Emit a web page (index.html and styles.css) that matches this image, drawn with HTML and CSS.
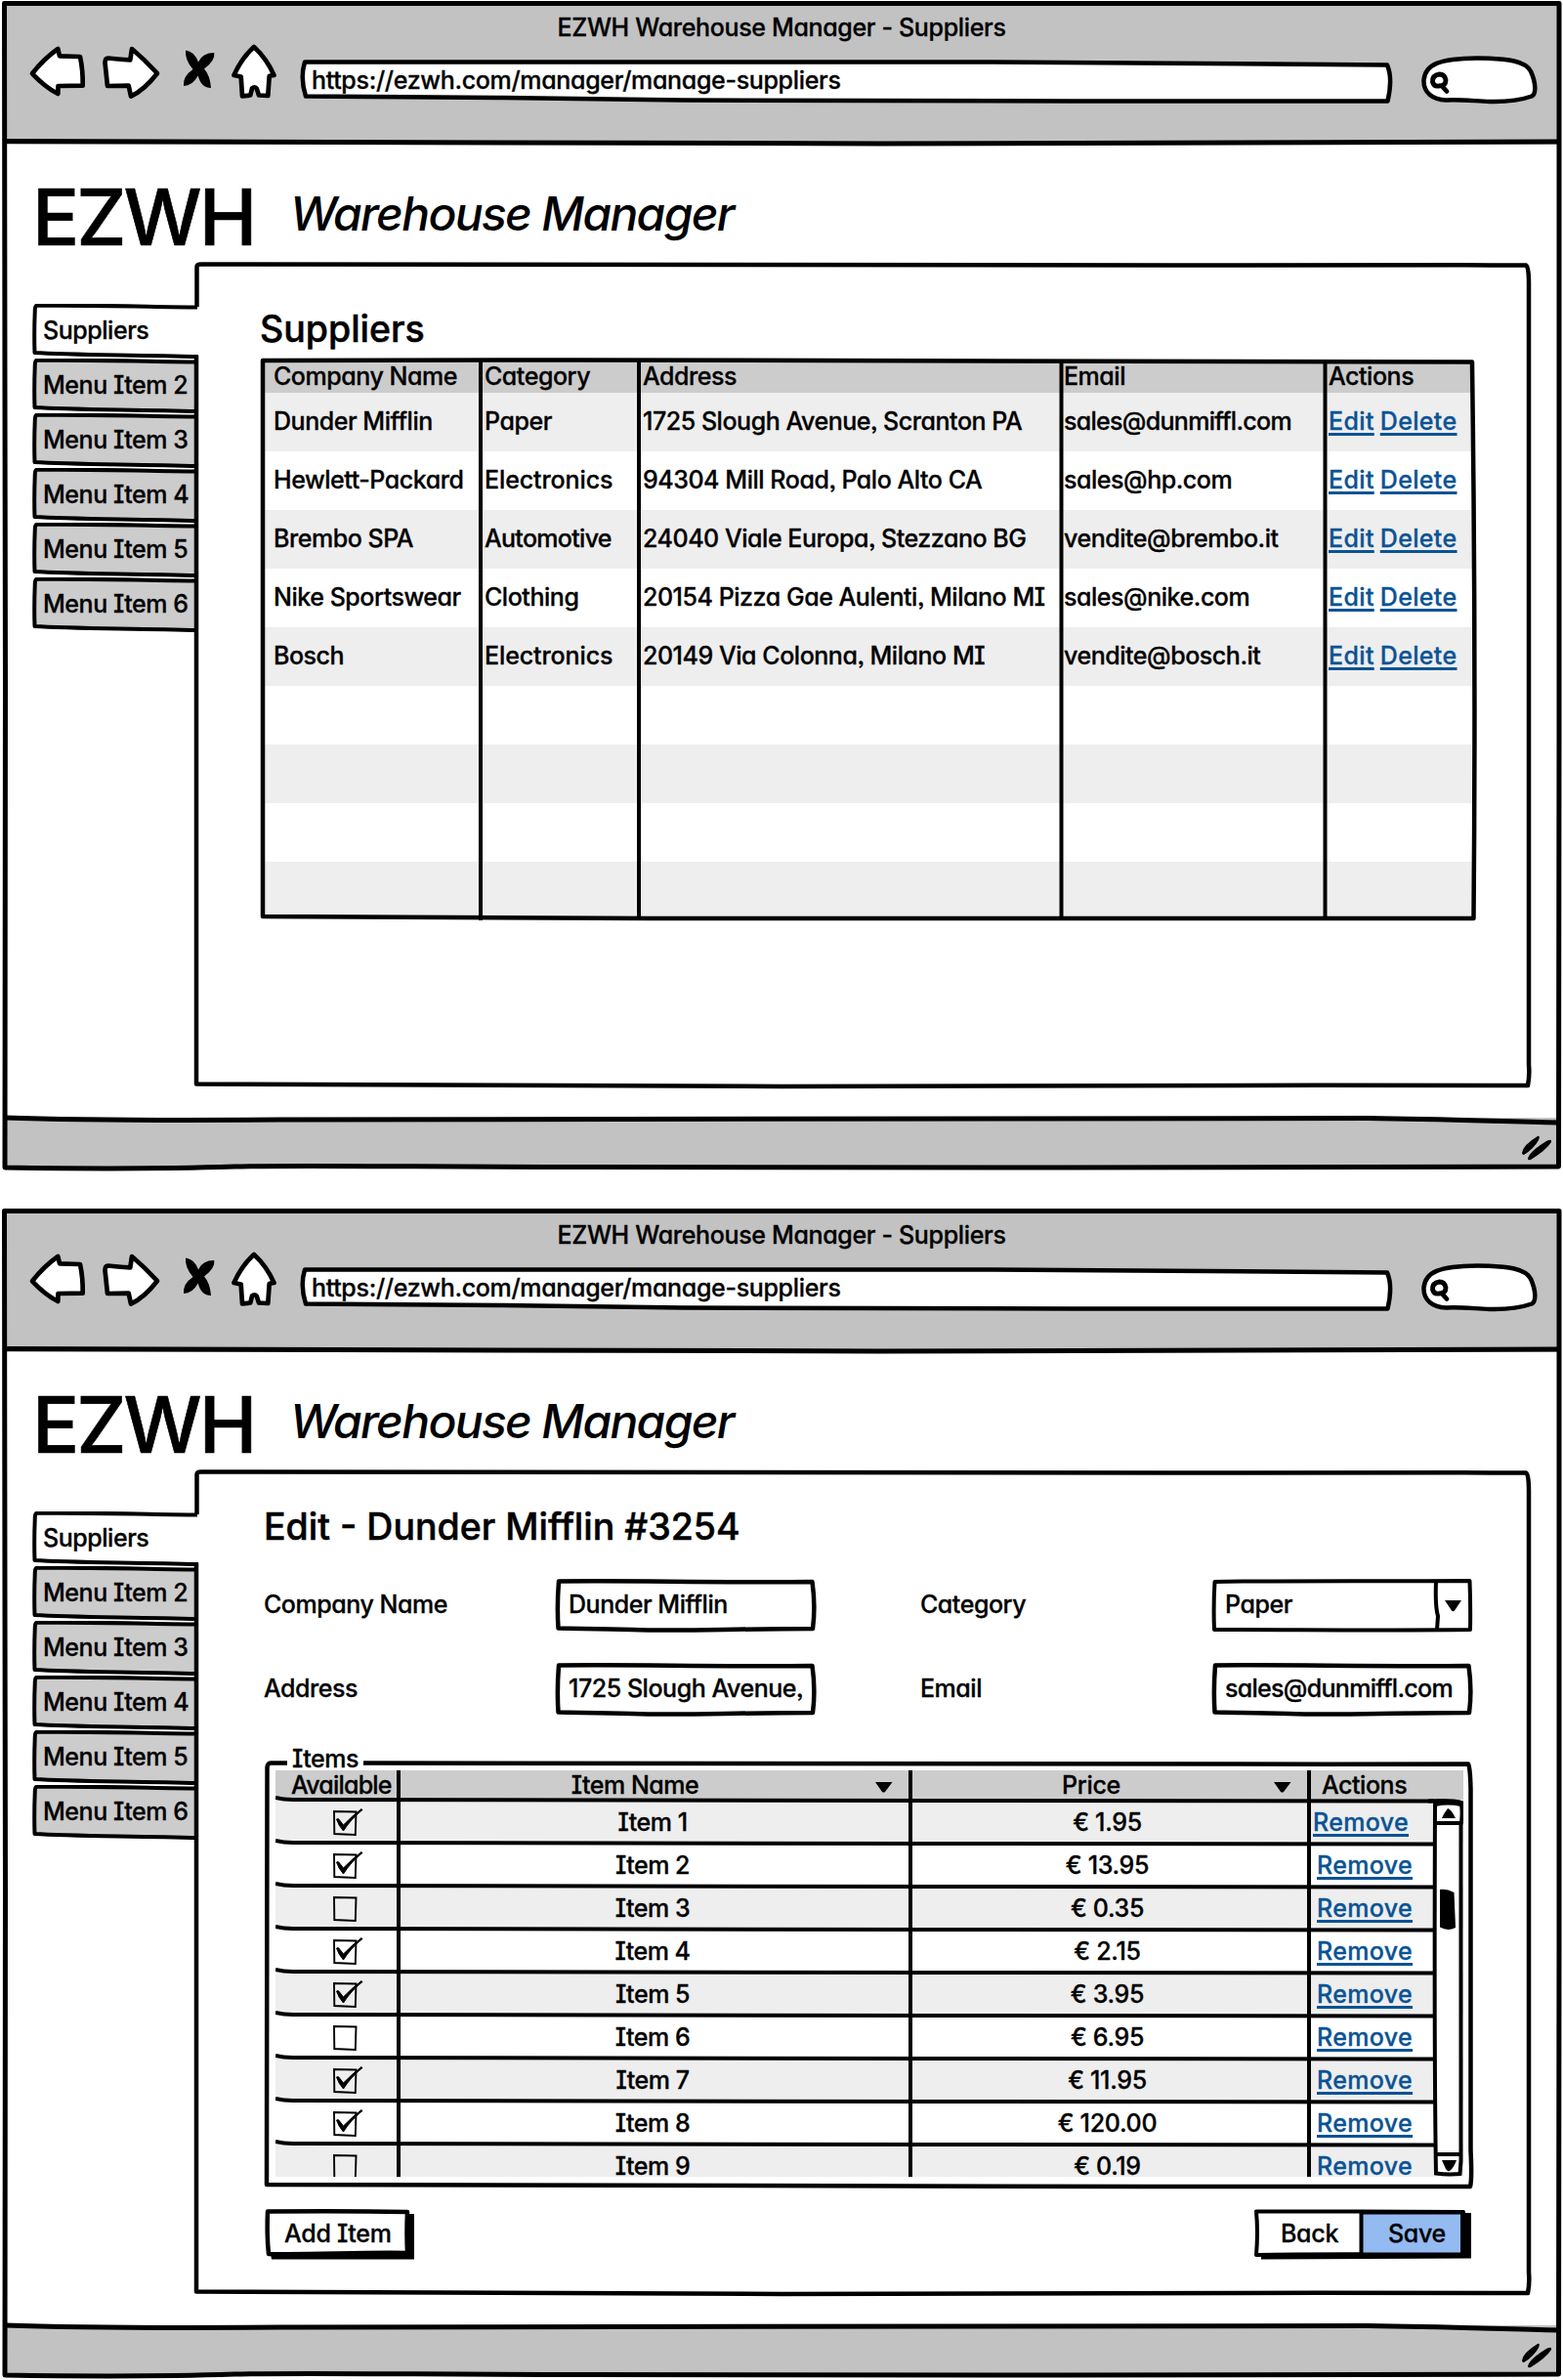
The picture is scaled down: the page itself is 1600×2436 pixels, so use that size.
FILE: index.html
```html
<!DOCTYPE html>
<html lang="en">
<head>
<meta charset="utf-8">
<title>EZWH Warehouse Manager - Suppliers</title>
<link rel="stylesheet" href="styles.css">
</head>
<body>
<svg class="defs" width="0" height="0">
  <symbol id="frame" viewBox="0 0 1600 1200">
    <g fill="none" stroke="#000" stroke-width="5" stroke-linejoin="round">
      <path d="M4.500 3.500H1596V760L1595.500 1194C1300 1195.500 900 1195 600 1194.500C400 1194 300 1192.500 240 1194C150 1197 70 1196 5 1195L5.500 700L5 400Z"/>
      <path d="M5 144.500C300 147.500 600 147 900 147C1200 147.500 1400 144.500 1595 145"/>
      <path d="M5 1144C100 1147.500 220 1146.500 300 1146C600 1144.500 1000 1143.500 1400 1144.500C1480 1145.500 1540 1148 1595 1149"/>
    </g>
    <g fill="none" stroke="#000" stroke-linejoin="round">
      <path stroke-width="4.500" d="M201.500 314V273Q201.500 270.500 206 270.500C600 270.500 900 270 1200 271.500C1350 272 1450 271 1562 271.500Q1565 272 1565 290V1090Q1566 1100 1564 1111C1300 1110 1000 1112.500 800 1112C500 1111.500 350 1109.500 201 1109.500V364"/>
    </g>
    <path d="M1558 1180Q1559 1172 1574 1163Q1577 1162 1575 1167Q1570 1176 1560 1182Q1558 1182 1558 1180ZM1564 1186Q1565 1179 1583 1168Q1589 1165 1588 1169Q1583 1177 1567 1187Q1564 1188 1564 1186Z"/>
  </symbol>
  <symbol id="back" viewBox="28 42 64 64"><path class="ink" d="M59.300 50Q45 60 33 75.300Q46 89 59.300 96L59.500 88L84.700 87.700Q85 72 82 58L61 57.300Z"/></symbol>
  <symbol id="forward" viewBox="102 42 64 64"><path class="ink" d="M135 50Q148 61 161 75Q148 92 134 98.500L131.700 87.700L110 88Q109 78 107.500 64.300Q107.500 59.500 110.700 59.500Q120 60.500 133.300 61.300Z"/></symbol>
  <symbol id="stop" viewBox="184 42 40 64"><path d="M190 51.500Q199 52.500 203 63.500Q207 54 219.300 54Q220.500 62 209 70.500Q215 77 216 90Q206 90 202.700 77.500Q197 88 188 88Q187 78 197.500 71Q189 61 190 51.500Z"/></symbol>
  <symbol id="home" viewBox="234 42 52 64"><path class="ink" d="M260 48Q247 60 239.500 77L246.700 78.500L248 98.300L256.300 97.500L258 90.500Q260.500 88 262.700 90.500L265 97.500L274.300 98L275.700 77.800L280.500 77Q273 60 260 48Z"/></symbol>
  <symbol id="urlbar" viewBox="305 58 1124 52"><path fill="#fff" stroke="#000" stroke-width="4.500" stroke-linejoin="round" d="M313 63.500H1000C1200 64 1300 65.500 1420 66.500Q1426 80 1420.500 103.500C1200 103.500 900 104 700 102.500C600 101 400 98.500 313 98.500Q307 80 312 63.500Z"/></symbol>
  <symbol id="search" viewBox="1450 54 128 56"><path fill="#fff" stroke="#000" stroke-width="4.500" stroke-linecap="round" d="M1480 102.500C1467 102 1457 95 1457.500 82C1459 66 1473 60 1512 59.500C1545 59.500 1562 63 1567 73C1572 84 1573 96 1568 98.500C1558 102 1545 104.500 1525 104C1505 103 1490 101.500 1481 102.500"/><path fill="none" stroke="#000" stroke-width="4.800" stroke-linecap="round" d="M1473.500 76Q1466 77 1466.500 84Q1468 89 1473 88Q1480 88 1480 82Q1479 76 1473.500 76ZM1476 88L1481 93.500"/></symbol>
  <symbol id="tab" viewBox="0 0 172 57"><path stroke="#000" stroke-width="4" stroke-linejoin="round" d="M169 3.500C120 3 60 1 4.500 1.800Q3 2 2.800 6Q1.800 30 2.500 50C40 52.500 100 52 170 54"/></symbol>
  <symbol id="suppliers-grid" viewBox="0 0 1250 580"><g fill="none" stroke="#000" stroke-linejoin="round"><path stroke-width="4.500" d="M4 4C400 2.500 700 4.500 1242 5.500Q1246 300 1243.500 575C1000 574 700 576 400 575C200 575 100 573 4 573Q3.500 300 4 4Z"/><path stroke-width="4" d="M227 3V577M389 3V577M821.500 3V577M1091.500 3V577"/></g></symbol>
  <symbol id="input" viewBox="0 0 270 58"><path fill="#fff" stroke="#000" stroke-width="4.500" stroke-linejoin="round" d="M5 4.500C80 3.500 160 6 264.500 5Q268 30 265 53C180 53 130 56 80 54C50 53 30 53 4.500 52.500Q3 30 5 4.500Z"/></symbol>
  <symbol id="combo" viewBox="0 0 270 58"><g fill="#fff" stroke="#000" stroke-width="4" stroke-linejoin="round"><path d="M4.500 5C80 3.500 170 4.500 265.500 4Q266.500 30 266 54C180 55 90 54 4 54Q3 30 4.500 5Z"/><path d="M231 5Q230 30 233 40L232 54"/></g><path d="M240 24H257L250 34.500Q248.500 36 247 34.500Z"/></symbol>
  <symbol id="group" viewBox="0 0 1240 444"><path fill="none" stroke="#000" stroke-width="4.500" stroke-linejoin="round" d="M24 3.500H7Q4 3.500 3.500 8Q4 200 3 435C300 437 600 438 900 437L1235 437Q1237 430 1235.500 400V30Q1235 8 1233 4.500C900 5.500 600 3 102 3.500"/></symbol>
  <symbol id="items-grid" viewBox="0 0 1216 416">
    <g fill="none" stroke="#000" stroke-width="4">
      <path id="rule" d="M0 28Q8 30 18 30C400 30.500 800 31.500 1186 31.500"/>
      <use href="#rule" y="44"/><use href="#rule" y="88"/><use href="#rule" y="132"/><use href="#rule" y="176"/><use href="#rule" y="220"/><use href="#rule" y="264"/><use href="#rule" y="308"/><use href="#rule" y="352"/>
      <path d="M126 0V416M650 0V416M1058 0V416"/>
    </g>
    <path fill="#fff" stroke="#000" stroke-width="4" d="M1187 35Q1200 32 1214 35Q1215.500 45 1213.500 56V400L1212.500 413Q1200 414 1188 412.500Q1186 300 1187 35ZM1187 54H1214M1187 393H1214"/>
    <path fill="none" stroke="#000" stroke-width="4" d="M1180 31.500Q1205 30 1216 33.500"/>
    <path d="M1200 39Q1203 39 1208 49H1194Q1196 44 1200 39ZM1194 399H1209Q1206 407 1202 410Q1200 411 1198 408ZM1192 122Q1199 121 1206.500 125L1208 161Q1200 165 1192 160.500Z"/>
    <path d="M614 12H631.500L624 22Q622.500 23 621 22ZM1022 12H1039.500L1032 22Q1030.500 23 1029 22Z"/>
  </symbol>
  <symbol id="box" viewBox="0 0 32 30"><path fill="none" stroke="#000" stroke-width="1.900" d="M2 4L24.500 4.500L23.800 28L2.300 27Z"/></symbol>
  <symbol id="checked" viewBox="0 0 32 30"><use href="#box"/><path stroke="#000" stroke-width="1" d="M4.500 12Q6.500 10.500 8 13.500L11.500 18Q20 9 30 1.500L31 2.500Q19 12 11.500 24Q6.500 18.500 4.500 12Z"/></symbol>
  <symbol id="button" viewBox="0 0 156 54"><path d="M7 48L8 53.500H154V7H147V46Z"/><path fill="#fff" stroke="#000" stroke-width="4.500" stroke-linejoin="round" d="M4 4.500C50 4 100 4 147 5Q146 25 147 47C100 46 50 49 5 48Q3 30 4 4.500Z"/></symbol>
  <symbol id="buttonbar" viewBox="0 0 228 54"><path d="M9 49V53.500L224 52.500V6H216V48Z"/><path fill="#fff" stroke="#000" stroke-width="4" stroke-linejoin="round" d="M4 4.500C70 4 150 5 216 5L215 48C150 49 70 47.500 4 49Q6 25 4 4.500Z"/><path fill="#94baf2" stroke="#000" stroke-width="4" d="M111.500 5.500H215V48.500H111.500Z"/></symbol>
</svg>

<section class="window">
  <svg class="frame"><use href="#frame"/></svg>
  <header class="chrome">
    <div class="title">EZWH Warehouse Manager - Suppliers</div>
    <nav class="toolbar">
      <svg class="i-back"><use href="#back"/></svg>
      <svg class="i-forward"><use href="#forward"/></svg>
      <svg class="i-stop"><use href="#stop"/></svg>
      <svg class="i-home"><use href="#home"/></svg>
      <div class="url"><svg class="sketch"><use href="#urlbar"/></svg><span>https://ezwh.com/manager/manage-suppliers</span></div>
      <svg class="i-search"><use href="#search"/></svg>
    </nav>
  </header>
  <div class="brand"><span class="logo">EZWH</span><span class="product">Warehouse Manager</span></div>
  <div class="content">
    <nav class="tabs">
      <div class="tab active"><svg class="sketch"><use href="#tab"/></svg><span>Suppliers</span></div>
      <div class="tab"><svg class="sketch"><use href="#tab"/></svg><span>Menu Item 2</span></div>
      <div class="tab"><svg class="sketch"><use href="#tab"/></svg><span>Menu Item 3</span></div>
      <div class="tab"><svg class="sketch"><use href="#tab"/></svg><span>Menu Item 4</span></div>
      <div class="tab"><svg class="sketch"><use href="#tab"/></svg><span>Menu Item 5</span></div>
      <div class="tab"><svg class="sketch"><use href="#tab"/></svg><span>Menu Item 6</span></div>
    </nav>
    <main class="panel list">
      <h2>Suppliers</h2>
      <div class="suppliers">
        <svg class="sketch"><use href="#suppliers-grid"/></svg>
        <div class="row head"><span>Company Name</span><span>Category</span><span>Address</span><span>Email</span><span>Actions</span></div>
        <div class="row"><span>Dunder Mifflin</span><span>Paper</span><span>1725 Slough Avenue, Scranton PA</span><span class="tight">sales@dunmiffl.com</span><span class="links"><a>Edit</a><a>Delete</a></span></div>
        <div class="row"><span>Hewlett-Packard</span><span class="wide">Electronics</span><span>94304 Mill Road, Palo Alto CA</span><span>sales@hp.com</span><span class="links"><a>Edit</a><a>Delete</a></span></div>
        <div class="row"><span>Brembo SPA</span><span class="tight">Automotive</span><span>24040 Viale Europa, Stezzano BG</span><span>vendite@brembo.it</span><span class="links"><a>Edit</a><a>Delete</a></span></div>
        <div class="row"><span>Nike Sportswear</span><span>Clothing</span><span>20154 Pizza Gae Aulenti, Milano MI</span><span>sales@nike.com</span><span class="links"><a>Edit</a><a>Delete</a></span></div>
        <div class="row"><span>Bosch</span><span class="wide">Electronics</span><span>20149 Via Colonna, Milano MI</span><span>vendite@bosch.it</span><span class="links"><a>Edit</a><a>Delete</a></span></div>
        <div class="row"></div>
        <div class="row"></div>
        <div class="row"></div>
        <div class="row last"></div>
      </div>
    </main>
  </div>
  <footer class="status"></footer>
</section>

<section class="window">
  <svg class="frame"><use href="#frame"/></svg>
  <header class="chrome">
    <div class="title">EZWH Warehouse Manager - Suppliers</div>
    <nav class="toolbar">
      <svg class="i-back"><use href="#back"/></svg>
      <svg class="i-forward"><use href="#forward"/></svg>
      <svg class="i-stop"><use href="#stop"/></svg>
      <svg class="i-home"><use href="#home"/></svg>
      <div class="url"><svg class="sketch"><use href="#urlbar"/></svg><span>https://ezwh.com/manager/manage-suppliers</span></div>
      <svg class="i-search"><use href="#search"/></svg>
    </nav>
  </header>
  <div class="brand"><span class="logo">EZWH</span><span class="product">Warehouse Manager</span></div>
  <div class="content">
    <nav class="tabs">
      <div class="tab active"><svg class="sketch"><use href="#tab"/></svg><span>Suppliers</span></div>
      <div class="tab"><svg class="sketch"><use href="#tab"/></svg><span>Menu Item 2</span></div>
      <div class="tab"><svg class="sketch"><use href="#tab"/></svg><span>Menu Item 3</span></div>
      <div class="tab"><svg class="sketch"><use href="#tab"/></svg><span>Menu Item 4</span></div>
      <div class="tab"><svg class="sketch"><use href="#tab"/></svg><span>Menu Item 5</span></div>
      <div class="tab"><svg class="sketch"><use href="#tab"/></svg><span>Menu Item 6</span></div>
    </nav>
    <main class="panel edit">
      <h2>Edit - Dunder Mifflin #3254</h2>
      <form class="fields">
        <label>Company Name</label>
        <div class="field"><svg class="sketch"><use href="#input"/></svg><span>Dunder Mifflin</span></div>
        <label>Category</label>
        <div class="field"><svg class="sketch"><use href="#combo"/></svg><span>Paper</span></div>
        <label>Address</label>
        <div class="field"><svg class="sketch"><use href="#input"/></svg><span>1725 Slough Avenue,</span></div>
        <label>Email</label>
        <div class="field"><svg class="sketch"><use href="#input"/></svg><span class="tight">sales@dunmiffl.com</span></div>
      </form>
      <div class="group">
        <svg class="sketch"><use href="#group"/></svg>
        <div class="legend">Items</div>
        <div class="items">
          <svg class="sketch over"><use href="#items-grid"/></svg>
          <div class="item head"><span class="avail">Available</span><span class="name">Item Name</span><span class="price">Price</span><span class="act">Actions</span></div>
          <div class="item first"><svg><use href="#checked"/></svg><span class="name">Item 1</span><span class="price">€ 1.95</span><a>Remove</a></div>
          <div class="item"><svg><use href="#checked"/></svg><span class="name">Item 2</span><span class="price">€ 13.95</span><a>Remove</a></div>
          <div class="item"><svg><use href="#box"/></svg><span class="name">Item 3</span><span class="price">€ 0.35</span><a>Remove</a></div>
          <div class="item"><svg><use href="#checked"/></svg><span class="name">Item 4</span><span class="price">€ 2.15</span><a>Remove</a></div>
          <div class="item"><svg><use href="#checked"/></svg><span class="name">Item 5</span><span class="price">€ 3.95</span><a>Remove</a></div>
          <div class="item"><svg><use href="#box"/></svg><span class="name">Item 6</span><span class="price">€ 6.95</span><a>Remove</a></div>
          <div class="item"><svg><use href="#checked"/></svg><span class="name">Item 7</span><span class="price">€ 11.95</span><a>Remove</a></div>
          <div class="item"><svg><use href="#checked"/></svg><span class="name">Item 8</span><span class="price">€ 120.00</span><a>Remove</a></div>
          <div class="item"><svg><use href="#box"/></svg><span class="name">Item 9</span><span class="price">€ 0.19</span><a>Remove</a></div>
        </div>
      </div>
      <div class="buttons">
        <div class="button"><svg class="sketch"><use href="#button"/></svg><span>Add Item</span></div>
        <div class="buttonbar"><svg class="sketch"><use href="#buttonbar"/></svg><span>Back</span><span>Save</span></div>
      </div>
    </main>
  </div>
  <footer class="status"></footer>
</section>
</body>
</html>
```
FILE: styles.css
```css
* { box-sizing: border-box; }

body {
  margin: 0;
  width: 1600px;
  background: #fff;
  color: #000;
  font: 500 25px/30px Inter, "Open Sans", sans-serif;
  font-feature-settings: "cv11", "cv08", "ss03";
  letter-spacing: -0.46px;
  -webkit-text-stroke: 0.3px;
  display: flex;
  flex-direction: column;
  gap: 36px;
}

svg { display: block; flex: none; }
.defs { position: absolute; }
.ink { fill: #fff; stroke: #000; stroke-width: 4.7; stroke-linejoin: round; }
span, a, label { white-space: nowrap; }
a { color: #0b5394; letter-spacing: 0.35px; text-decoration: underline 2.5px; text-underline-offset: 3px; text-decoration-skip-ink: none; }
.tight { letter-spacing: -0.7px; }
.wide { letter-spacing: -0.1px; }

/* hand-drawn outlines behind (or over) their box */
.sketch { position: absolute; left: 0; top: 0; width: 100%; height: 100%; z-index: -1; }
.sketch.over { z-index: 1; }

.window {
  position: relative;
  z-index: 0;
  height: 1200px;
  display: flex;
  flex-direction: column;
}
.frame { position: absolute; inset: 0; width: 1600px; height: 1200px; z-index: 1; }

.chrome { height: 146px; margin: 2px 4px 0; margin-bottom: -2px; background: #c2c2c2; padding-top: 11px; flex: none; }
.title { text-align: center; letter-spacing: -0.34px; }
.toolbar { display: flex; align-items: flex-start; margin: -1px -4px 0; padding-left: 28px; }
.toolbar > svg { height: 64px; }
.i-back { width: 64px; }
.i-forward { width: 64px; margin-left: 10px; }
.i-stop { width: 40px; margin-left: 18px; }
.i-home { width: 52px; margin-left: 10px; }
.url {
  position: relative;
  z-index: 0;
  width: 1124px;
  height: 52px;
  margin: 16px 0 0 19px;
  padding: 9px 0 0 14px;
  letter-spacing: -0.33px;
}
.toolbar > .i-search { width: 128px; height: 56px; margin: 12px 0 0 21px; }

.brand { height: 124px; padding-left: 33px; display: flex; align-items: center; padding-top: 28px; flex: none; }
.logo { font-size: 80px; line-height: 90px; width: 264px; letter-spacing: -3px; -webkit-text-stroke: 0.6px; }
.product { font-size: 48px; line-height: 60px; font-style: italic; margin-top: -7px; letter-spacing: -1.7px; -webkit-text-stroke: 0; }

.content { display: flex; height: 876px; flex: none; }
.tabs { width: 168px; margin-left: 33px; padding-top: 41px; }
.tab { position: relative; z-index: 0; height: 56px; padding: 12px 0 0 11px; }
.tab .sketch { width: 172px; height: 57px; fill: #ccc; }
.tab.active .sketch { fill: #fff; }

.panel { width: 1365px; height: 841px; }
h2 { margin: 0; font-size: 37.5px; line-height: 48px; font-weight: 500; letter-spacing: 0; -webkit-text-stroke: 0.5px; white-space: nowrap; }

.list { padding: 43px 0 0 65px; }
.suppliers { position: relative; z-index: 0; width: 1247px; height: 577px; margin: 4px 0 0 -1px; padding: 4px 5px 0 3px; }
.suppliers .sketch { width: 1250px; height: 580px; z-index: 1; }
.row {
  height: 60px;
  display: grid;
  grid-template-columns: 216px 162px 431px 271px 1fr;
  align-items: center;
  padding-left: 12px;
}
.row:nth-child(odd) { background: #eee; }
.row.head { height: 33px; background: #ccc; }
.row.last { height: 56px; }
.row > span { padding-bottom: 2px; }
.row.head > span { padding-bottom: 1px; }
.links { display: flex; gap: 6px; }

.edit { padding: 33px 0 0 69px; }
.fields {
  display: grid;
  grid-template-columns: 297px 375px 297px 270px;
  grid-auto-rows: 58px;
  row-gap: 28px;
  margin-top: 27px;
  align-items: center;
}
.fields label { padding-bottom: 3px; }
.field { position: relative; z-index: 0; width: 270px; height: 58px; padding: 13px 0 0 15px; }

.group { position: relative; z-index: 0; width: 1240px; height: 444px; margin-top: 43px; }
.legend { position: absolute; left: 29px; top: -16px; }
.items { position: relative; z-index: 0; width: 1216px; height: 416px; margin-left: 12px; top: 11px; overflow: hidden; }
.item {
  height: 44px;
  display: grid;
  grid-template-columns: 126px 524px 408px 1fr;
  align-items: center;
  padding-top: 2px;
}
.item:nth-child(odd) { background: #eee; }
.item.head { height: 30px; background: #ccc; padding-top: 0; }
.item svg:not(.sketch) { width: 32px; height: 30px; margin-left: 58px; }
.item .name, .item .price { text-align: center; }
.item .name { padding-right: 4px; }
.item .price { padding-right: 5px; letter-spacing: -0.3px; }
.item.head .name { padding-right: 40px; }
.item.head .price { padding-right: 38px; }
.item .avail { padding-left: 16px; letter-spacing: -0.8px; }
.item .act { padding-left: 13px; }
.item a { margin-left: 8px; justify-self: start; }
.item.first a { margin-left: 4px; }

.buttons { display: flex; justify-content: space-between; margin-top: 14px; }
.button { position: relative; z-index: 0; width: 156px; height: 54px; padding: 12px 0 0 21px; }
.buttonbar { position: relative; z-index: 0; width: 228px; height: 54px; margin-right: 56px; padding: 12px 30px 0 29px; display: flex; justify-content: space-between; }
.buttonbar, .button { letter-spacing: -0.3px; }

.status { height: 51px; margin: -2px 5px 0; background: #c2c2c2; }
```
